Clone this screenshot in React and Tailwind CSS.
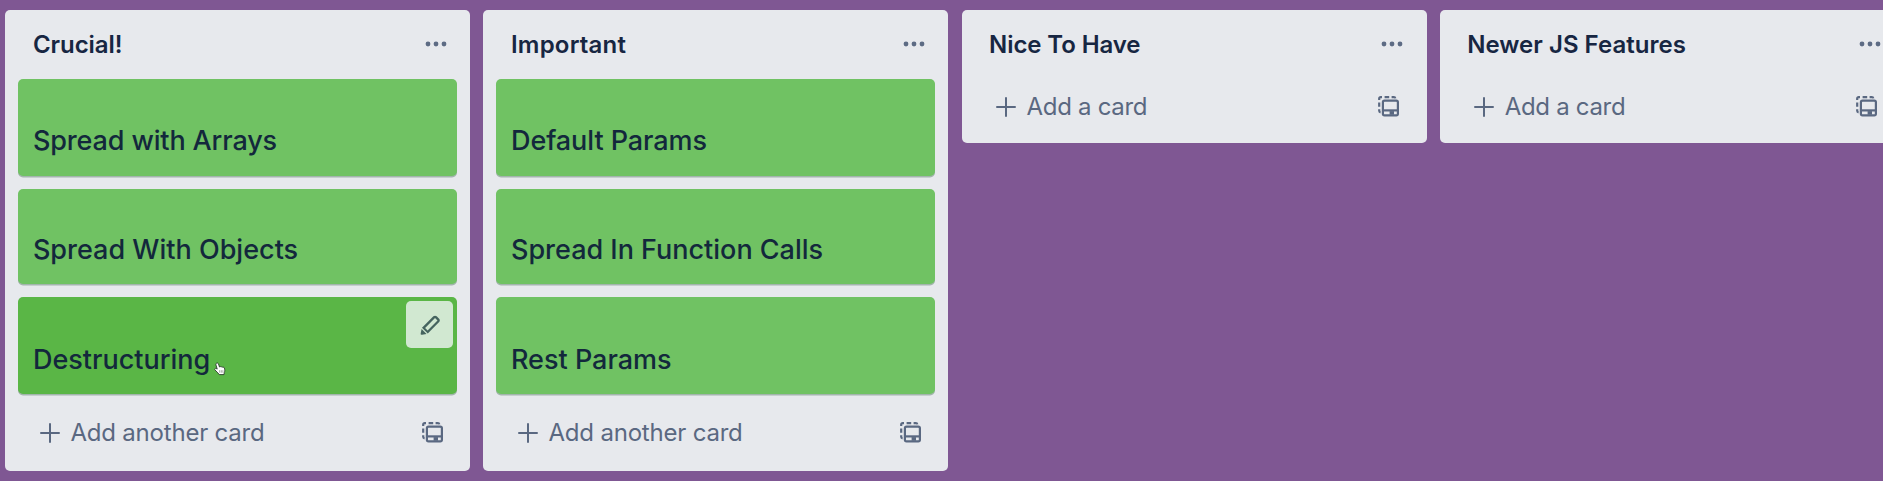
const columns = [
  {
    title: "Crucial!",
    titleClass: "tracking-[-0.05px]",
    cards: [
      { text: "Spread with Arrays", textClass: "tracking-[-0.13px]" },
      { text: "Spread With Objects", textClass: "tracking-[0.01px]" },
      { text: "Destructuring", textClass: "tracking-[0px]", hovered: true },
    ],
    add: "Add another card",
    addClass: "tracking-[-0.2px]",
  },
  {
    title: "Important",
    titleClass: "tracking-[0.2px]",
    cards: [
      { text: "Default Params", textClass: "tracking-[-0.08px]" },
      { text: "Spread In Function Calls", textClass: "tracking-[-0.01px]" },
      { text: "Rest Params", textClass: "tracking-[0px]" },
    ],
    add: "Add another card",
    addClass: "tracking-[-0.2px]",
  },
  {
    title: "Nice To Have",
    titleClass: "tracking-[-0.1px]",
    cards: [],
    add: "Add a card",
    addClass: "tracking-[-0.3px]",
  },
  {
    title: "Newer JS Features",
    titleClass: "tracking-[0.03px]",
    cards: [],
    add: "Add a card",
    addClass: "tracking-[-0.3px]",
  },
];

const cardHeights = ["h-[97px] pb-[14.5px]", "h-[95px] pb-[14px]", "h-[97px] pb-[14px]"];

function Dots() {
  return (
    <svg width="22" height="6" viewBox="0 0 22 6" fill="currentColor" className="shrink-0">
      <circle cx="3" cy="3" r="2.4" />
      <circle cx="11" cy="3" r="2.4" />
      <circle cx="19" cy="3" r="2.4" />
    </svg>
  );
}

function Plus() {
  return (
    <svg width="20" height="20" viewBox="0 0 20 20" fill="none" stroke="currentColor" strokeWidth="2" strokeLinecap="round" className="shrink-0">
      <path d="M10 1v18M1 10h18" />
    </svg>
  );
}

function TemplateIcon() {
  return (
    <svg width="21" height="21" viewBox="0 0 21 21" fill="none" stroke="currentColor" strokeWidth="2.2" className="shrink-0">
      <path d="M1.2 4V2.6C1.2 1.8 1.8 1.2 2.6 1.2H4M6.6 1.2h4.6M13.6 1.2h2.2c.8 0 1.4.5 1.5 1.2M1.2 6.4v4.4M1.2 13.2v1.6c0 .9.5 1.5 1.4 1.7" />
      <rect x="4.9" y="4.6" width="15" height="14.8" rx="1.6" />
      <path d="M5 14.4h15" />
      <path d="M11.6 16.9H16" strokeWidth="3.6" />
    </svg>
  );
}

function Pencil() {
  return (
    <svg width="28" height="28" viewBox="0 0 24 24" fill="currentColor">
      <path
        fillRule="evenodd"
        d="M7.82 14.489l2.121 2.121 8.489-8.489L16.309 6h-.002L7.82 14.489zM17.723 4.585l2.121 2.122c.781.781.781 2.047 0 2.828l-9.757 9.758-4.95-4.95 9.757-9.758A1.995 1.995 0 0 1 16.309 4c.511 0 1.023.195 1.414.585zM5.201 20.41a1 1 0 0 1-1.18-1.18l.78-3.81 4.209 4.21-3.809.78z"
      />
    </svg>
  );
}

function HandPointer() {
  return (
    <svg width="12" height="14" viewBox="0 0 12 14" className="absolute left-[196px] top-[65px]">
      <path
        d="M2.6 1.2c.8-.5 1.6 0 1.9.8l1 3c.4-.5 1.2-.5 1.6 0 .5-.4 1.3-.3 1.6.3.7-.3 1.5.1 1.7.8.4 1.4.7 3-.1 4.3L10 12.6H5.2L3.9 10.9.9 7.9C.2 7 1.2 6 2.2 6.5l1 .6-1.3-4.3c-.2-.7 0-1.3.7-1.6z"
        fill="#fff"
        stroke="#2b3a2b"
        strokeWidth=".9"
      />
      <path d="M5.7 8.2v2.5M7.3 8.2v2.5M8.9 8.2v2.5" stroke="#667066" strokeWidth=".6" />
    </svg>
  );
}

function Card({ card, sizeClass }) {
  return (
    <div
      className={`relative flex items-end rounded-[5px] pl-[14.5px] shadow-[0_1.5px_0_#a3b5ad] ${sizeClass} ${
        card.hovered ? "bg-[#5ab646]" : "bg-[#70c263]"
      }`}
    >
      <span className={`whitespace-nowrap text-[27px] leading-[40px] font-medium text-[#13283c] ${card.textClass}`}>
        {card.text}
      </span>
      {card.hovered && (
        <>
          <button className="absolute top-[4px] right-[4px] flex size-[47.5px] items-center justify-center rounded-[5px] bg-[#d1e8d1] text-[#45645f]">
            <Pencil />
          </button>
          <HandPointer />
        </>
      )}
    </div>
  );
}

function Column({ column }) {
  return (
    <section className="flex w-[465px] shrink-0 flex-col rounded-[5px] bg-[#e7e9ed] px-[13px]">
      <header className="flex h-[68.5px] items-center justify-between pr-[10.4px] pb-[1px] pl-[14.5px] text-[#5d6b84]">
        <h2 className={`whitespace-nowrap pt-[1px] text-[24px] leading-[32px] font-semibold text-[#172642] ${column.titleClass}`}>
          {column.title}
        </h2>
        <Dots />
      </header>
      {column.cards.length > 0 && (
        <div className="flex flex-col gap-[13px]">
          {column.cards.map((card, i) => (
            <Card key={card.text} card={card} sizeClass={cardHeights[i]} />
          ))}
        </div>
      )}
      <footer className={`flex items-center pr-[14.4px] pl-[21.5px] text-[#5a6881] ${column.cards.length ? "h-[77.7px]" : "h-[64.5px] pb-[9px]"}`}>
        <Plus />
        <span className={`ml-[10.5px] flex-1 whitespace-nowrap text-[24px] leading-[32px] ${column.addClass}`}>{column.add}</span>
        <TemplateIcon />
      </footer>
    </section>
  );
}

export default function App() {
  return (
    <main className="flex h-[481px] w-full items-start gap-[13.1px] overflow-hidden bg-[#7f5793] pt-[10.3px] pl-[5.4px] font-['Inter',sans-serif]">
      {columns.map((column) => (
        <Column key={column.title} column={column} />
      ))}
    </main>
  );
}
